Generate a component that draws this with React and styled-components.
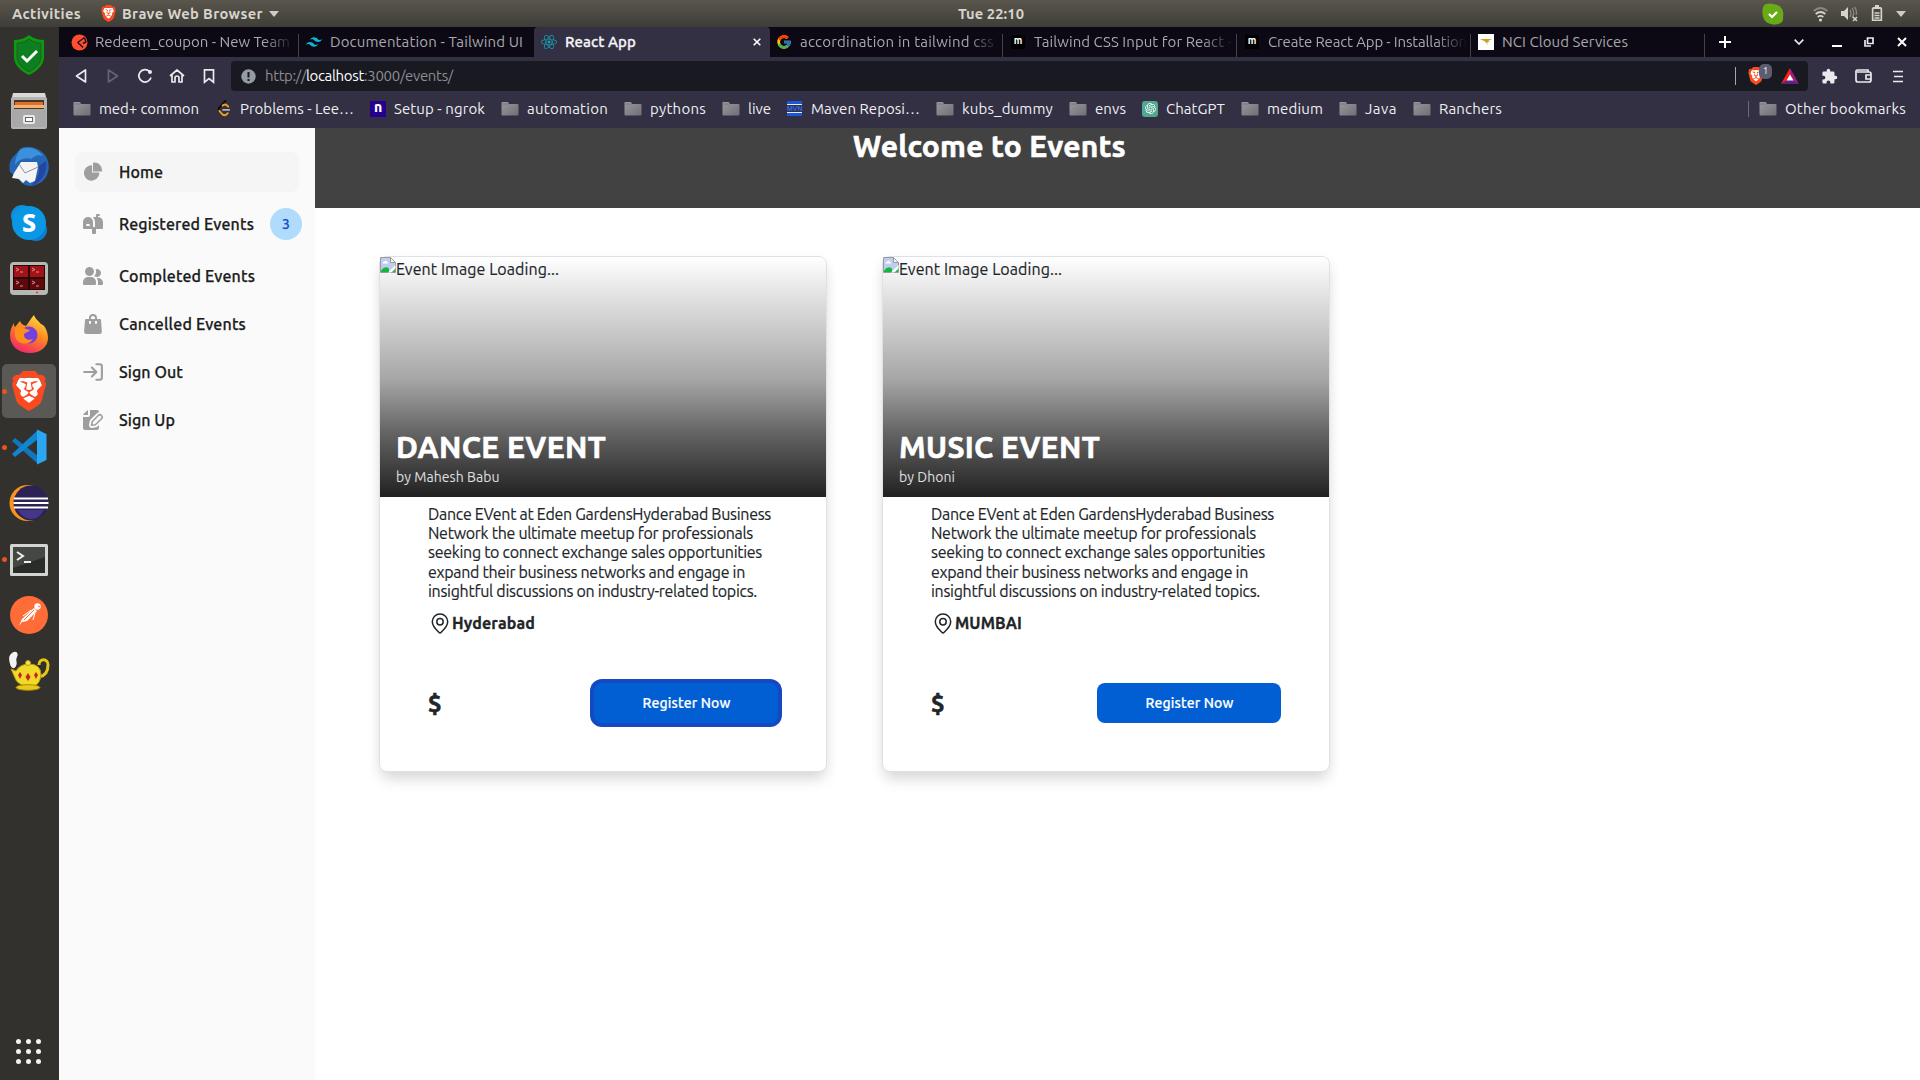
import React, { useLayoutEffect, useRef, useState } from "react";
import styled, { createGlobalStyle, css } from "styled-components";
import { FaReact } from "react-icons/fa";
import { FcGoogle } from "react-icons/fc";
import { SiTailwindcss, SiBrave } from "react-icons/si";
import { RiOpenaiFill } from "react-icons/ri";

const GlobalStyle = createGlobalStyle`
  * { box-sizing: border-box; }
  html, body { margin: 0; padding: 0; overflow: hidden; background: #fff; }
  body { font-family: Ubuntu, "Noto Sans", "Open Sans", sans-serif; color: #212529; }
  svg { display: block; flex: none; }
`;

/* ---------- text tracked to a fixed measure ---------- */
const Line = styled.span`
  display: inline-block;
  white-space: pre;
  flex: none;
`;

function Fit({ w, children }) {
  const ref = useRef(null);
  const [spacing, setSpacing] = useState(0);
  useLayoutEffect(() => {
    const el = ref.current;
    el.style.letterSpacing = "0px";
    const natural = el.getBoundingClientRect().width;
    setSpacing((w - natural) / el.textContent.length);
    el.style.letterSpacing = `${(w - natural) / el.textContent.length}px`;
  }, [w, children]);
  return (
    <Line ref={ref} style={{ letterSpacing: `${spacing}px` }}>
      {children}
    </Line>
  );
}

/* ---------- shell ---------- */
const Desktop = styled.div`
  width: 1920px;
  height: 1080px;
  display: flex;
  flex-direction: column;
  overflow: hidden;
`;

const TopBar = styled.header`
  height: 27px;
  flex: none;
  display: grid;
  grid-template-columns: 1fr auto 1fr;
  align-items: center;
  padding: 0 14px 0 12px;
  background: linear-gradient(#5a564d, #3e3d38);
  color: #d8d4cd;
  font-size: 14.67px;
  line-height: 25px;
  font-weight: 600;
`;
const TopLeft = styled.div`
  display: flex;
  align-items: center;
`;
const AppMenu = styled.div`
  display: flex;
  align-items: center;
  margin-left: 20px;
  gap: 6px;
`;
const Clock = styled.div`
  padding-left: 64px;
`;
const TopRight = styled.div`
  display: flex;
  align-items: center;
  justify-content: flex-end;
`;
const TrayIcon = styled.div`
  margin-left: ${(p) => p.$ml}px;
`;

const Below = styled.div`
  flex: 1;
  display: flex;
  min-height: 0;
`;

const Dock = styled.nav`
  width: 59px;
  flex: none;
  background: #33312d;
  display: flex;
  flex-direction: column;
  gap: 2px;
  padding: 1px 3px 0 2px;
`;
const DockItem = styled.div`
  height: 54px;
  flex: none;
  display: flex;
  align-items: center;
  justify-content: center;
  border-radius: 5px;
  position: relative;
  background: ${(p) => (p.$active ? "#5b5955" : "transparent")};
  ${(p) =>
    p.$running &&
    css`
      &::before {
        content: "";
        position: absolute;
        left: 0;
        top: 25px;
        width: 5px;
        height: 5px;
        border-radius: 50%;
        background: #e95420;
      }
    `}
`;
const AppsButton = styled.div`
  margin-top: auto;
  height: 58px;
  display: grid;
  grid-template-columns: repeat(3, 5px);
  grid-auto-rows: 5px;
  gap: 5px;
  justify-content: center;
  align-content: center;
  padding-right: 1px;
`;
const AppsDot = styled.i`
  border-radius: 50%;
  background: #f4f3f1;
`;

const Browser = styled.main`
  flex: 1;
  min-width: 0;
  display: flex;
  flex-direction: column;
`;

/* ---------- tabs ---------- */
const TabStrip = styled.div`
  height: 30px;
  flex: none;
  background: #0c0915;
  display: flex;
  padding-left: 6px;
  font-size: 15px;
`;
const Tab = styled.div`
  width: ${(p) => p.$w}px;
  flex: none;
  display: flex;
  align-items: center;
  padding: 0 0 0 ${(p) => p.$pad || 6}px;
  line-height: 30px;
  color: ${(p) => (p.$active ? "#f4f4f6" : "#a9a8ae")};
  font-weight: ${(p) => (p.$active ? 500 : 400)};
  -webkit-text-stroke: ${(p) => (p.$active ? "0.3px currentColor" : "0")};
  background: ${(p) =>
    p.$active
      ? "#323042"
      : p.$divider
      ? "linear-gradient(#454348, #454348) right 7px / 1px 23px no-repeat"
      : "none"};
  border-radius: ${(p) => (p.$active ? "4px 4px 0 0" : 0)};
`;
const TabIcon = styled.span`
  width: 24px;
  flex: none;
  display: flex;
`;
const TabTitle = styled.span`
  width: 200px;
  flex: none;
  ${(p) =>
    p.$fade &&
    css`
      mask-image: linear-gradient(to right, #000 168px, transparent 199px);
    `}
`;
const CloseTab = styled.span`
  margin-left: -12px;
`;
const MBadge = styled.span`
  width: 14px;
  height: 14px;
  margin-left: 1px;
  border-radius: 2px;
  background: #000;
  color: #fff;
  font-size: 10px;
  line-height: 12px;
  font-weight: 700;
  text-align: center;
`;
const WindowTools = styled.div`
  flex: 1;
  display: flex;
  align-items: center;
  padding-left: 14px;
`;
const Tool = styled.span`
  margin-left: ${(p) => p.$ml || 0}px;
`;

/* ---------- toolbar ---------- */
const Toolbar = styled.div`
  height: 38px;
  flex: none;
  background: #323042;
  display: flex;
  align-items: center;
  padding: 0 14px 0 14px;
`;
const NavButtons = styled.div`
  display: flex;
  gap: 16px;
  width: 158px;
`;
const Address = styled.div`
  width: 1577px;
  height: 30px;
  border-radius: 4px;
  background: #191921;
  display: flex;
  align-items: center;
  padding: 0 9px 0 10px;
  color: #8c8c93;
  font-size: 15px;
  line-height: 28px;
`;
const UrlText = styled.div`
  margin-left: 9px;
  flex: 1;
  display: flex;
`;
const HostName = styled.span`
  color: #fff;
`;
const Shields = styled.div`
  display: flex;
  align-items: center;
  position: relative;
  border-left: 1px solid #a5a5ab;
  height: 18px;
  padding-left: 12px;
  gap: 17px;
`;
const Count = styled.span`
  position: absolute;
  left: 23px;
  top: -3px;
  width: 13px;
  height: 15px;
  border-radius: 5px;
  background: #5d5d72;
  color: #fff;
  font-size: 9px;
  line-height: 15px;
  text-align: center;
`;
const ToolbarEnd = styled.div`
  display: flex;
  align-items: center;
  padding-left: 13px;
  gap: 17px;
`;
const MenuButton = styled.span`
  margin-left: 4px;
`;

/* ---------- bookmarks ---------- */
const Bookmarks = styled.div`
  height: 33px;
  flex: none;
  background: #323042;
  display: flex;
  align-items: flex-start;
  padding: 0 14px 0 14px;
  color: #efeff2;
  font-size: 15px;
  line-height: 26px;
`;
const Bookmark = styled.div`
  display: flex;
  align-items: center;
  height: 27px;
  flex: none;
  width: ${(p) => (p.$w ? `${p.$w}px` : "auto")};
`;
const BookmarkIcon = styled.span`
  width: ${(p) => p.$w}px;
  flex: none;
  display: flex;
`;
const OtherBookmarks = styled(Bookmark)`
  margin-left: auto;
`;
const Divider = styled.i`
  width: 1px;
  height: 16px;
  background: #6b6a76;
  margin-right: 10px;
`;
const NgrokMark = styled.span`
  width: 16px;
  height: 16px;
  background: #25008e;
  color: #fff;
  font-weight: 800;
  font-size: 14px;
  line-height: 12px;
  text-align: center;
`;
const MavenMark = styled.span`
  width: 15px;
  height: 15px;
  border-top: 3px solid #1a56db;
  border-bottom: 3px solid #1a56db;
  background: linear-gradient(#e6ebf5 1px, #323042 1px, #323042 8px, #e6ebf5 8px);
  color: #2d6bf0;
  font: 800 7px/9px "Liberation Sans", sans-serif;
  text-align: center;
`;
const GptMark = styled.span`
  width: 16px;
  height: 16px;
  border-radius: 3px;
  background: #4fa890;
  color: #fff;
  display: grid;
  place-items: center;
`;

/* ---------- page ---------- */
const Page = styled.div`
  flex: 1;
  display: flex;
  min-height: 0;
  background: #fff;
`;
const Sidebar = styled.aside`
  width: 256px;
  flex: none;
  background: #fafafa;
  padding: 24px 12px 0 16px;
  display: flex;
  flex-direction: column;
  gap: 8px;
`;
const SideItem = styled.div`
  height: ${(p) => (p.$badge ? 48 : 40)}px;
  width: ${(p) => (p.$badge ? "auto" : "224px")};
  display: flex;
  align-items: center;
  gap: 16px;
  padding-left: 8px;
  border-radius: 8px;
  background: ${(p) => (p.$active ? "#f5f5f5" : "transparent")};
  color: #1c1c1c;
  font-size: 16px;
  line-height: 24px;
  font-weight: 500;
  -webkit-text-stroke: 0.25px currentColor;
  svg {
    color: #9e9e9e;
  }
`;
const Badge = styled.span`
  width: 32px;
  height: 32px;
  border-radius: 50%;
  background: #b0dbfd;
  color: #1a4fc4;
  font-size: 14px;
  line-height: 32px;
  text-align: center;
`;
const Content = styled.section`
  flex: 1;
  min-width: 0;
`;
const Banner = styled.div`
  height: 80px;
  background: #424242;
  text-align: center;
`;
const BannerTitle = styled.h1`
  margin: 0;
  padding-right: 256px;
  color: #fff;
  font-size: 30px;
  line-height: 36px;
  font-weight: 700;
  -webkit-text-stroke: 0.6px currentColor;
`;
const Cards = styled.div`
  display: flex;
  gap: 56px;
  padding: 48px 0 0 64px;
`;
const Card = styled.article`
  width: 447.5px;
  height: 515.5px;
  margin-right: -0.5px;
  border: 1px solid #dee2e6;
  border-radius: 8px;
  background: #fff;
  box-shadow: 0 10px 15px -3px rgba(0, 0, 0, 0.12), 0 4px 14px rgba(0, 0, 0, 0.06);
  display: flex;
  flex-direction: column;
`;
const Cover = styled.div`
  height: 240px;
  flex: none;
  border-radius: 7px 7px 0 0;
  background: linear-gradient(#fff 0%, #e2e2e2 16%, #c2c2c2 35%, #a6a6a6 51%, #626262 74%, #212121 100%);
  display: flex;
  flex-direction: column;
  justify-content: space-between;
  padding-bottom: 10px;
`;
const AltRow = styled.div`
  display: flex;
  align-items: flex-start;
  font-size: 16px;
  line-height: 24px;
  -webkit-text-stroke: 0.15px currentColor;
`;
const CoverText = styled.div`
  padding-left: 16px;
`;
const EventName = styled.h2`
  margin: 0 0 2px;
  color: #fff;
  font-size: 30px;
  line-height: 36px;
  font-weight: 700;
  -webkit-text-stroke: 0.6px currentColor;
`;
const Organizer = styled.div`
  color: #e0e0e0;
  font-size: 14px;
  line-height: 20px;
`;
const CardBody = styled.div`
  padding: 8px 48px 0;
`;
const Description = styled.div`
  display: flex;
  flex-direction: column;
  font-size: 16px;
  line-height: 19.2px;
  -webkit-text-stroke: 0.15px currentColor;
`;
const Location = styled.div`
  display: flex;
  align-items: center;
  margin-top: 10px;
  height: 24px;
  padding-left: 3px;
  gap: 3px;
  font-size: 16px;
  font-weight: 700;
`;
const City = styled.span`
  -webkit-text-stroke: 0.3px currentColor;
`;
const BuyRow = styled.div`
  display: flex;
  align-items: center;
  justify-content: space-between;
  margin-top: 46px;
  height: 44px;
`;
const Price = styled.span`
  font-size: 24px;
  line-height: 31px;
  font-weight: 700;
  -webkit-text-stroke: 0.6px currentColor;
`;
const Register = styled.button`
  width: 184px;
  height: 40px;
  border: 0;
  border-radius: 8px;
  padding: 0 0 0 2px;
  background: #015fd3;
  color: #fff;
  font: 500 14px/20px Ubuntu, "Noto Sans", sans-serif;
  -webkit-text-stroke: 0.2px currentColor;
  box-shadow: ${(p) => (p.$focus ? "0 0 0 4px #1548c3" : "none")};
`;

/* ---------- drawings ---------- */
const Folder = () => (
  <svg width="18" height="16" viewBox="0 0 18 16">
    <defs>
      <linearGradient id="fold" x1="0" y1="0" x2="1" y2="1">
        <stop offset="0" stopColor="#9a99a0" />
        <stop offset="1" stopColor="#6f6e74" />
      </linearGradient>
    </defs>
    <path d="M1 1h6l1 2h8.500a1 1 0 0 1 1 1v9.500a1 1 0 0 1-1 1H1.500a1 1 0 0 1-1-1V1.500z" fill="url(#fold)" />
    <path d="M.5 3h7" stroke="#77767c" />
  </svg>
);
const Leetcode = () => (
  <svg width="15" height="17" viewBox="0 0 16 18" fill="none" strokeWidth="2" strokeLinecap="round">
    <path d="M9 1 2.500 8q-1.500 1.800 0 3.500" stroke="#0b0b0b" />
    <path d="M2.500 11.500 6 15.500q2 1.500 4 0l1.500-1.500M6 6l.5-.5q2-1.500 4 0l1.500 1.500" stroke="#f0a020" />
    <path d="M6.500 10.500h6.500" stroke="#b3b3b3" />
  </svg>
);
const PostmanTab = () => (
  <svg width="17" height="17" viewBox="0 0 17 17">
    <circle cx="8.500" cy="8.500" r="8" fill="#ff4f2e" />
    <path d="M13.500 3.500 7 8.300l1.500 2M8.500 10l3.500 3.500M13.500 4l1.500 4-3 1.500" fill="none" stroke="#1b1020" strokeWidth="1.400" />
  </svg>
);
const Nci = () => (
  <svg width="16" height="16" viewBox="0 0 16 16">
    <path fill="#fff" d="M0 0h16v16H0z" />
    <path d="M2 5h12l-4 2 2 .5-3 1 1 2.500-3-3.500z" fill="#c8a220" />
  </svg>
);
const BraveIcon = ({ w, h }) => (
  <svg width={w} height={h} viewBox="2 0 20 24">
    <path d="M6 4h12l2 5-3 9-5 4-5-4-3-9z" fill="#fff" />
    <SiBrave size={24} color="#fb4a1f" />
  </svg>
);
const DownTriangle = () => (
  <svg width="10" height="6" viewBox="0 0 10 6">
    <path d="M0 0h10L5 6z" fill="#cfccc6" />
  </svg>
);
const BrokenImage = () => (
  <svg width="16" height="16" viewBox="0 0 16 16">
    <path d="M.5.5h10l5 5v10H.5z" fill="#fff" stroke="#9a9a9a" />
    <path d="M1 1h9v5h5v3L9 15H1z" fill="#c0cdf2" />
    <path d="M2.500 6q0-2 2-1.500Q6 2.500 7 5q1.500 0 1 1.500H2.500z" fill="#fff" />
    <path d="M1 15v-1.500Q5 8 9 11.500V15z" fill="#12b93e" />
    <path d="M8 15.500 15.500 8v3L11 15.500z" fill="#fff" />
    <path d="M12 15l3-3v3z" fill="#12b93e" />
    <path d="M10.500.5v5h5z" fill="#f4f4f4" stroke="#9a9a9a" />
  </svg>
);
const Pin = () => (
  <svg width="18" height="21" viewBox="0 0 18 21" fill="none" stroke="#212529" strokeWidth="1.500">
    <path d="M9 1a7.600 7.600 0 0 0-7.700 7.600c0 5.200 4.200 8.400 6.700 10.800q1 .9 2 0c2.500-2.400 6.700-5.600 6.700-10.800A7.600 7.600 0 0 0 9 1z" />
    <circle cx="9" cy="8.700" r="3.200" />
  </svg>
);

const PieIcon = () => (
  <svg width="20" height="20" viewBox="0 0 22 21" fill="currentColor">
    <path d="M16.975 11H10V4.025a1 1 0 0 0-1.066-.998 8.500 8.500 0 1 0 9.039 9.039.999.999 0 0 0-1-1.066h.002Z" />
    <path d="M12.500 0c-.157 0-.311.01-.565.027A1 1 0 0 0 11 1.020V10h8.975a1 1 0 0 0 1-.935c.013-.188.028-.374.028-.565A8.510 8.510 0 0 0 12.500 0Z" />
  </svg>
);
const MailboxIcon = () => (
  <svg width="20" height="20" viewBox="0 0 20 20" fill="currentColor">
    <path d="m17.418 3.623-.018-.008a6.713 6.713 0 0 0-2.400-.569V2h1a1 1 0 1 0 0-2h-2a1 1 0 0 0-1 1v2H9.890A6.977 6.977 0 0 1 12 8v5h-2V8A5 5 0 1 0 0 8v6a1 1 0 0 0 1 1h8v4a1 1 0 0 0 1 1h2a1 1 0 0 0 1-1v-4h6a1 1 0 0 0 1-1V8a5 5 0 0 0-2.582-4.377ZM6 12H4a1 1 0 0 1 0-2h2a1 1 0 0 1 0 2Z" />
  </svg>
);
const UsersIcon = () => (
  <svg width="20" height="20" viewBox="0 0 20 18" fill="currentColor">
    <path d="M14 2a3.963 3.963 0 0 0-1.400.267 6.439 6.439 0 0 1-1.331 6.638A4 4 0 1 0 14 2Zm1 9h-1.264A6.957 6.957 0 0 1 15 15v2a2.970 2.970 0 0 1-.184 1H19a1 1 0 0 0 1-1v-1a5.006 5.006 0 0 0-5-5ZM6.500 9a4.500 4.500 0 1 0 0-9 4.500 4.500 0 0 0 0 9ZM8 10H5a5.006 5.006 0 0 0-5 5v2a1 1 0 0 0 1 1h11a1 1 0 0 0 1-1v-2a5.006 5.006 0 0 0-5-5Z" />
  </svg>
);
const BagIcon = () => (
  <svg width="20" height="20" viewBox="0 0 18 20" fill="currentColor">
    <path d="M17 5.923A1 1 0 0 0 16 5h-3V4a4 4 0 1 0-8 0v1H2a1 1 0 0 0-1 .923L.086 17.846A2 2 0 0 0 2.080 20h13.840a2 2 0 0 0 1.994-2.153L17 5.923ZM7 9a1 1 0 0 1-2 0V7h2v2Zm0-5a2 2 0 1 1 4 0v1H7V4Zm6 5a1 1 0 1 1-2 0V7h2v2Z" />
  </svg>
);
const ExitIcon = () => (
  <svg width="20" height="20" viewBox="0 0 18 16" fill="none" stroke="currentColor" strokeWidth="1.900" strokeLinecap="round" strokeLinejoin="round">
    <path d="M1 8h11m0 0L8 4m4 4-4 4m4-11h3a2 2 0 0 1 2 2v10a2 2 0 0 1-2 2h-3" />
  </svg>
);
const SignIcon = () => (
  <svg width="20" height="20" viewBox="0 0 20 20" fill="currentColor">
    <path d="M5 5V.13a2.960 2.960 0 0 0-1.293.749L.879 3.707A2.960 2.960 0 0 0 .13 5H5Z" />
    <path d="M6.737 11.061a2.961 2.961 0 0 1 .81-1.515l6.117-6.116A4.839 4.839 0 0 1 16 2.141V2a1.970 1.970 0 0 0-1.933-2H7v5a2 2 0 0 1-2 2H0v11a1.969 1.969 0 0 0 1.933 2h12.134A1.970 1.970 0 0 0 16 18v-3.093l-1.546 1.546c-.413.413-.94.695-1.513.81l-3.400.679a2.947 2.947 0 0 1-1.850-.227 2.960 2.960 0 0 1-1.635-3.257l.681-3.397Z" />
    <path d="M8.500 15.300l.8-3.800 6-6a2.200 2.200 0 0 1 3.200 3.200l-6.100 6z" fill="none" stroke="currentColor" strokeWidth="1.600" strokeLinejoin="round" />
  </svg>
);

/* dock drawings */
const Shield = () => (
  <svg width="34" height="42" viewBox="0 0 34 42">
    <path d="M17 1C12 5 7 6 2 6v17c0 8 7 14 15 18 8-4 15-10 15-18V6C27 6 22 5 17 1z" fill="#0a9c0d" />
    <path d="M17 5c-4 3-8 4-12 4v14c0 6 5 11 12 15 7-4 12-9 12-15V9c-4 0-8-1-12-4z" fill="#0b7f22" stroke="#2c5a22" />
    <path d="M10 22l5 5 10-10" fill="none" stroke="#fff" strokeWidth="3" />
  </svg>
);
const Files = () => (
  <svg width="38" height="38" viewBox="0 0 38 38">
    <path d="M3 1h32l2 8H1z" fill="#d9d9d9" />
    <rect x="1" y="5" width="36" height="32" rx="2" fill="#b4b4b4" />
    <path d="M4 8h30v10H4z" fill="#4b3527" />
    <path d="M5 10h28v4H5z" fill="#d9722e" />
    <path d="M4 13h30v3H4z" fill="#f7b070" />
    <path d="M2 17h34v18H2z" fill="#aaa9a9" />
    <rect x="13" y="23" width="12" height="9" rx="2" fill="#e9e9e9" />
    <rect x="15.500" y="25.500" width="7" height="4" fill="#fff" stroke="#666" />
  </svg>
);
const Thunderbird = () => (
  <svg width="42" height="42" viewBox="0 0 42 42">
    <path d="M12 3C18-1 28 1 34 6c6 5 8 13 6 20-2 8-9 13-17 14-6 0-9-3-11-5L2 26C0 18 3 12 7 9z" fill="#2566b5" />
    <path d="M12 4c7-5 19-1 23 6-6-2-9 1-12 3-6-2-12 0-16 6 0-6 2-11 5-15z" fill="#3c91dc" />
    <path d="M13 16l16 0 1 5-3 14-5 2-4-3-3 3-4-4-7-1 2-5z" fill="#f4f4f4" />
    <path d="M11 18l6 9 13-6" fill="none" stroke="#8d929c" />
    <path d="M38 15c2 13-6 22-15 25 6-6 9-13 8-20z" fill="#2743a4" />
  </svg>
);
const Skype = () => (
  <svg width="38" height="38" viewBox="0 0 38 38">
    <circle cx="12" cy="12" r="11" fill="#0f8fd8" />
    <circle cx="26" cy="26" r="11" fill="#0c7cd0" />
    <circle cx="19" cy="19" r="17" fill="#0a97e4" />
    <text x="19" y="28" textAnchor="middle" fontFamily="Noto Sans, sans-serif" fontWeight="800" fontSize="25" fill="#fff">S</text>
  </svg>
);
const Terminator = () => (
  <svg width="40" height="36" viewBox="0 0 40 36">
    <rect x="1" y="1" width="38" height="33" rx="4" fill="#b6b8b4" />
    <rect x="4" y="4" width="32" height="25" fill="#2a0606" />
    <path d="M5 5h14v11H5zM21 5h14v11H21z" fill="#a31216" />
    <path d="M5 18h14v10H5zM21 18h14v10H21z" fill="#5e090c" />
    <path d="M7 7l3 1.500L7 10M11 11h3M23 7l3 1.500-3 1.500M27 11h3M7 20l3 1.500L7 23M11 25h3M23 20l3 1.500-3 1.500M27 25h3" stroke="#e3a3a3" fill="none" strokeWidth=".9" />
    <circle cx="28" cy="31.500" r="1" fill="#e33" />
  </svg>
);
const Firefox = () => (
  <svg width="40" height="42" viewBox="0 0 40 42">
    <defs>
      <linearGradient id="ff" x1=".8" y1="0" x2=".3" y2="1">
        <stop offset="0" stopColor="#ffe14a" />
        <stop offset=".45" stopColor="#ff8a1f" />
        <stop offset="1" stopColor="#f0246c" />
      </linearGradient>
    </defs>
    <path d="M25 1c1 4 4 5 7 9 4 1 7 8 7 14 0 9-8 15-18 15C9 39 1 32 1 21c0-5 2-9 4-12 0 2 0 3 1 4l5-6c1 3 3 4 6 5 3-4 5-8 8-11z" fill="url(#ff)" />
    <circle cx="20" cy="21" r="8.500" fill="#7340dd" />
    <path d="M6 14c5-2 8-1 11 1l4 1c-2 3-6 2-6 5 0 4 5 6 9 4-4 7-16 6-18-3z" fill="#ff8f1c" />
  </svg>
);
const VsCode = () => (
  <svg width="36" height="36" viewBox="0 0 36 36">
    <path d="M1 12l3-3 23 18v8L1 12z" fill="#0e77bd" />
    <path d="M1 25l3 3L27 10V1L1 25z" fill="#1185cf" />
    <path d="M26 .5 35.500 5v26L26 35.500z" fill="#2aa6f2" />
  </svg>
);
const Eclipse = () => (
  <svg width="40" height="38" viewBox="0 0 40 38">
    <circle cx="18.500" cy="19" r="18" fill="#f7941e" />
    <circle cx="22" cy="19" r="17.500" fill="#2c2255" />
    <path d="M5 14.500h34M4.500 19h35M5 23.500h34" stroke="#fff" strokeWidth="2" />
    <path d="M9 26h26q-5 9-13 9T9 26z" fill="#43378a" />
  </svg>
);
const Terminal = () => (
  <svg width="38" height="34" viewBox="0 -2 38 34">
    <rect width="38" height="32" rx="1.500" fill="#d3d5d1" />
    <rect x="3" y="3" width="32" height="26" fill="#2a2c2a" />
    <path d="M3 3h32v10L3 24z" fill="#454745" />
    <path d="M7 8l6 4-6 4M14 18h7" fill="none" stroke="#eee" strokeWidth="2" />
  </svg>
);
const PostmanDock = () => (
  <svg width="38" height="38" viewBox="0 0 38 38">
    <circle cx="19" cy="19" r="19" fill="#ff6c37" />
    <circle cx="27.500" cy="10.500" r="3.200" fill="#fff" />
    <path d="M24 12l3 3-10 10-5 1-3 4 3-7z" fill="#fff" />
    <path d="M24 14 14 24M21 14l-7 6M28 10l2 1" stroke="#ff6c37" />
    <path d="M21 14 13 20M25 17l-2 7" stroke="#fff" />
  </svg>
);
const Lamp = () => (
  <svg width="42" height="40" viewBox="0 0 42 40">
    <path d="M4 2c4-3 7 0 5 4s1 5-1 9-5 2-6-2S0 5 4 2z" fill="#f3f3f3" />
    <path d="M31 14c0-7 9-7 9 0s-3 11-9 12" fill="none" stroke="#e3c917" strokeWidth="3" />
    <path d="M3 18l5 2q4-7 13-7 12 0 12 11-1 10-8 11h-8Q9 33 7 27z" fill="#f1da27" stroke="#b9970b" />
    <circle cx="20" cy="12" r="2.500" fill="#f8e65a" stroke="#b9970b" />
    <ellipse cx="20" cy="36.500" rx="12" ry="2.800" fill="#e6c91a" stroke="#a98a0a" />
    <path d="M12 21l2 3-2 4-2-4zM20 22l2.500 4-2.500 4-2.500-4zM28 21l2 3-2 4-2-4z" fill="#c8202a" />
  </svg>
);

/* ---------- data ---------- */
const dock = [
  { icon: <Shield /> },
  { icon: <Files /> },
  { icon: <Thunderbird /> },
  { icon: <Skype /> },
  { icon: <Terminator /> },
  { icon: <Firefox /> },
  { icon: <BraveIcon w={34} h={40} />, active: true, running: true },
  { icon: <VsCode />, running: true },
  { icon: <Eclipse /> },
  { icon: <Terminal />, running: true },
  { icon: <PostmanDock /> },
  { icon: <Lamp /> },
];

const tabs = [
  { icon: <PostmanTab />, title: "Redeem_coupon - New Team", w: 195, width: 234, fade: true, divider: true },
  { icon: <SiTailwindcss size={16} color="#0fb5d6" />, title: "Documentation - Tailwind UI", w: 193, width: 235, pad: 7 },
  { icon: <FaReact size={16} color="#14a3b8" />, title: "React App", w: 71, width: 236, pad: 7, active: true },
  { icon: <FcGoogle size={16} />, title: "accordination in tailwind css", w: 194, width: 233, fade: true, divider: true },
  { icon: <MBadge>m</MBadge>, title: "Tailwind CSS Input for React -", w: 198, width: 234, pad: 7, fade: true, divider: true },
  { icon: <MBadge>m</MBadge>, title: "Create React App - Installation", w: 199, width: 234, pad: 7, fade: true, divider: true },
  { icon: <Nci />, title: "NCI Cloud Services", w: 126, width: 234, pad: 7, divider: true },
];

const bookmarks = [
  { title: "med+ common", w: 100, width: 144 },
  { icon: <Leetcode />, title: "Problems - Lee…", w: 114, width: 153, slot: 23 },
  { icon: <NgrokMark>n</NgrokMark>, title: "Setup - ngrok", w: 91, width: 131, slot: 24 },
  { title: "automation", w: 81, width: 123 },
  { title: "pythons", w: 56, width: 98 },
  { title: "live", w: 23, width: 65 },
  { icon: <MavenMark>MVN</MavenMark>, title: "Maven Reposi…", w: 109, width: 149, slot: 24 },
  { title: "kubs_dummy", w: 91, width: 133 },
  { title: "envs", w: 31, width: 73 },
  { icon: <GptMark><RiOpenaiFill size={13} /></GptMark>, title: "ChatGPT", w: 59, width: 99, slot: 24 },
  { title: "medium", w: 56, width: 98 },
  { title: "Java", w: 32, width: 74 },
  { title: "Ranchers", w: 63, width: 100 },
];

const menu = [
  { icon: <PieIcon />, label: "Home", w: 44, active: true },
  { icon: <MailboxIcon />, label: "Registered Events", w: 135, badge: 3 },
  { icon: <UsersIcon />, label: "Completed Events", w: 136 },
  { icon: <BagIcon />, label: "Cancelled Events", w: 127 },
  { icon: <ExitIcon />, label: "Sign Out", w: 64 },
  { icon: <SignIcon />, label: "Sign Up", w: 56 },
];

const description = [
  ["Dance EVent at Eden GardensHyderabad Business", 343],
  ["Network the ultimate meetup for professionals", 325],
  ["seeking to connect exchange sales opportunities", 334],
  ["expand their business networks and engage in", 317],
  ["insightful discussions on industry-related topics.", 329],
];

const events = [
  { name: "DANCE EVENT", nameW: 210, by: "by Mahesh Babu", byW: 103.5, city: "Hyderabad", cityW: 83, focus: true },
  { name: "MUSIC EVENT", nameW: 201, by: "by Dhoni", byW: 56, city: "MUMBAI", cityW: 67 },
];

const white = { fill: "none", stroke: "#e9e9ee", strokeWidth: 1.7 };

export default function App() {
  return (
    <Desktop>
      <GlobalStyle />
      <TopBar>
        <TopLeft>
          <Fit w={69}>Activities</Fit>
          <AppMenu>
            <BraveIcon w={15} h={17} />
            <Fit w={141}>Brave Web Browser</Fit>
            <DownTriangle />
          </AppMenu>
        </TopLeft>
        <Clock>
          <Fit w={66}>Tue 22:10</Fit>
        </Clock>
        <TopRight>
          <svg width="22" height="22" viewBox="0 0 22 22">
            <path d="M4 1q4-1 7 0 6 0 9 5 2 3 1 8 1 6-5 7-4 1-7 0-6-1-8-7Q-1 3 4 1z" fill="#68ab16" />
            <path d="M7 11l3 3 5-5" fill="none" stroke="#fff" strokeWidth="2.200" />
          </svg>
          <TrayIcon $ml={29}>
            <svg width="15" height="16" viewBox="0 0 15 16" fill="none" strokeWidth="1.800">
              <path d="M.7 5q6.800-6 13.600 0" stroke="#8b8983" />
              <path d="M2.700 8q4.800-4 9.600 0M4.700 11q2.800-2.300 5.600 0" stroke="#d6d3cd" />
              <circle cx="7.500" cy="14" r="1.600" fill="#d6d3cd" />
            </svg>
          </TrayIcon>
          <TrayIcon $ml={13}>
            <svg width="17" height="16" viewBox="0 0 17 16">
              <path d="M0 5h3l4-4v13l-4-4H0z" fill="#d6d3cd" />
              <path d="M9 4q2 4 0 7M11 2q3.500 5 0 10M13.500 1q3 4 1.500 8" stroke="#8b8983" fill="none" strokeWidth="1.300" />
              <path d="M12 11l4 4m0-4-4 4" stroke="#d6d3cd" strokeWidth="1.500" />
            </svg>
          </TrayIcon>
          <TrayIcon $ml={13}>
            <svg width="12" height="17" viewBox="0 0 12 17">
              <path d="M4 0h4v2h2l1.200 1.500V16H.8V3.500L2 2h2z" fill="#d6d3cd" />
              <path d="M2.500 4h7v10.500h-7z" fill="#4a4842" />
              <path d="M3.500 8h5M3.500 10.500h5M3.500 13h5" stroke="#d6d3cd" strokeWidth="1.500" />
            </svg>
          </TrayIcon>
          <TrayIcon $ml={13}>
            <DownTriangle />
          </TrayIcon>
        </TopRight>
      </TopBar>

      <Below>
        <Dock>
          {dock.map((d, i) => (
            <DockItem key={i} $active={d.active} $running={d.running}>
              {d.icon}
            </DockItem>
          ))}
          <AppsButton>
            {Array.from({ length: 9 }, (_, i) => (
              <AppsDot key={i} />
            ))}
          </AppsButton>
        </Dock>

        <Browser>
          <TabStrip>
            {tabs.map((t) => (
              <Tab key={t.title} $w={t.width} $pad={t.pad} $active={t.active} $divider={t.divider}>
                <TabIcon>{t.icon}</TabIcon>
                <TabTitle $fade={t.fade}>
                  <Fit w={t.w}>{t.title}</Fit>
                </TabTitle>
                {t.active && (
                  <CloseTab>
                    <svg width="8" height="8" viewBox="0 0 8 8">
                      <path d="M.7.7l6.600 6.600m0-6.600L.7 7.300" stroke="#fff" strokeWidth="1.600" />
                    </svg>
                  </CloseTab>
                )}
              </Tab>
            ))}
            <WindowTools>
              <svg width="12" height="12" viewBox="0 0 12 12">
                <path d="M6 0v12M0 6h12" stroke="#fff" strokeWidth="2" />
              </svg>
              <Tool $ml={63}>
                <svg width="10" height="6" viewBox="0 0 10 6">
                  <path d="M.7.7 5 5 9.300.7" {...white} />
                </svg>
              </Tool>
              <Tool $ml={28}>
                <svg width="10" height="10" viewBox="0 0 10 10">
                  <path d="M0 9h10" stroke="#fff" strokeWidth="2" />
                </svg>
              </Tool>
              <Tool $ml={22}>
                <svg width="10" height="10" viewBox="0 0 10 10">
                  <path d="M3.500 1h5.500v5.500H3.500zM1 3v6h6" {...white} />
                </svg>
              </Tool>
              <Tool $ml={23}>
                <svg width="10" height="10" viewBox="0 0 10 10">
                  <path d="M1 1l8 8m0-8L1 9" stroke="#fff" strokeWidth="2" />
                </svg>
              </Tool>
            </WindowTools>
          </TabStrip>

          <Toolbar>
            <NavButtons>
              <svg width="16" height="16" viewBox="0 0 16 16"><path d="M12.500 2v12L3.500 8z" {...white} strokeLinejoin="round" /></svg>
              <svg width="16" height="16" viewBox="0 0 16 16"><path d="M3.500 2v12l9-6z" {...white} stroke="#66646f" strokeLinejoin="round" /></svg>
              <svg width="16" height="16" viewBox="0 0 16 16">
                <path d="M12.500 3.500a6.200 6.200 0 1 0 1.500 6" {...white} />
                <circle cx="13" cy="4" r="2" fill="#e9e9ee" />
              </svg>
              <svg width="16" height="16" viewBox="0 0 16 16"><path d="M1 8l7-6 7 6M3 7v7h3v-4a2 2 0 0 1 4 0v4h3V7" {...white} strokeLinejoin="round" /></svg>
              <svg width="16" height="16" viewBox="0 0 16 16"><path d="M3.500 1.800h9v12.400l-4.500-3.700-4.500 3.700z" {...white} /></svg>
            </NavButtons>
            <Address>
              <svg width="15" height="15" viewBox="0 0 15 15">
                <circle cx="7.500" cy="7.500" r="7.200" fill="#969ba3" />
                <path d="M7.500 3v5.500M7.500 10v2" stroke="#191921" strokeWidth="2" />
              </svg>
              <UrlText>
                <Fit w={41}>http://</Fit>
                <HostName><Fit w={58}>localhost</Fit></HostName>
                <Fit w={89}>:3000/events/</Fit>
              </UrlText>
              <Shields>
                <BraveIcon w={16} h={18} />
                <Count>1</Count>
                <svg width="18" height="16" viewBox="0 0 18 16">
                  <path d="M9 0 0 16l9-5z" fill="#ff2018" />
                  <path d="M9 0l9 16-9-5z" fill="#9e1f78" />
                  <path d="M0 16h18l-9-6z" fill="#5c2484" />
                  <path d="M9 6.500l3.500 6h-7z" fill="#fff" />
                </svg>
              </Shields>
            </Address>
            <ToolbarEnd>
              <svg width="17" height="17" viewBox="0 0 24 24" fill="#e9e9ee">
                <path d="M20.500 11H19V7a2 2 0 0 0-2-2h-4V3.500a2.500 2.500 0 0 0-5 0V5H4a2 2 0 0 0-2 2v3.800h1.500a2.700 2.700 0 0 1 0 5.400H2V20a2 2 0 0 0 2 2h3.800v-1.500a2.700 2.700 0 0 1 5.400 0V22H17a2 2 0 0 0 2-2v-4h1.500a2.500 2.500 0 0 0 0-5z" />
              </svg>
              <svg width="17" height="14" viewBox="0 0 17 14">
                <path d="M3 1h10v2M3 1a2 2 0 0 0-2 1v9q0 2 2 2h11q2 0 2-2V5q0-2-2-2H2" {...white} />
                <path d="M16 6h-5v4h5" {...white} />
              </svg>
              <MenuButton>
                <svg width="10" height="13" viewBox="0 0 10 13">
                  <path d="M0 1.500h10M1 6.500h9M0 11.500h10" stroke="#e9e9ee" strokeWidth="1.600" />
                </svg>
              </MenuButton>
            </ToolbarEnd>
          </Toolbar>

          <Bookmarks>
            {bookmarks.map((b) => (
              <Bookmark key={b.title} $w={b.width}>
                <BookmarkIcon $w={b.slot || 26}>{b.icon || <Folder />}</BookmarkIcon>
                <Fit w={b.w}>{b.title}</Fit>
              </Bookmark>
            ))}
            <OtherBookmarks>
              <Divider />
              <BookmarkIcon $w={26}><Folder /></BookmarkIcon>
              <Fit w={121}>Other bookmarks</Fit>
            </OtherBookmarks>
          </Bookmarks>

          <Page>
            <Sidebar>
              {menu.map((m) => (
                <SideItem key={m.label} $active={m.active} $badge={!!m.badge}>
                  {m.icon}
                  <Fit w={m.w}>{m.label}</Fit>
                  {m.badge && <Badge>{m.badge}</Badge>}
                </SideItem>
              ))}
            </Sidebar>
            <Content>
              <Banner>
                <BannerTitle><Fit w={273}>Welcome to Events</Fit></BannerTitle>
              </Banner>
              <Cards>
                {events.map((e) => (
                  <Card key={e.name}>
                    <Cover>
                      <AltRow>
                        <BrokenImage />
                        <Fit w={163}>Event Image Loading...</Fit>
                      </AltRow>
                      <CoverText>
                        <EventName><Fit w={e.nameW}>{e.name}</Fit></EventName>
                        <Organizer><Fit w={e.byW}>{e.by}</Fit></Organizer>
                      </CoverText>
                    </Cover>
                    <CardBody>
                      <Description>
                        {description.map(([line, w]) => (
                          <div key={line}><Fit w={w}>{line}</Fit></div>
                        ))}
                      </Description>
                      <Location>
                        <Pin />
                        <City><Fit w={e.cityW}>{e.city}</Fit></City>
                      </Location>
                      <BuyRow>
                        <Price>$</Price>
                        <Register $focus={e.focus}><Fit w={88}>Register Now</Fit></Register>
                      </BuyRow>
                    </CardBody>
                  </Card>
                ))}
              </Cards>
            </Content>
          </Page>
        </Browser>
      </Below>
    </Desktop>
  );
}
